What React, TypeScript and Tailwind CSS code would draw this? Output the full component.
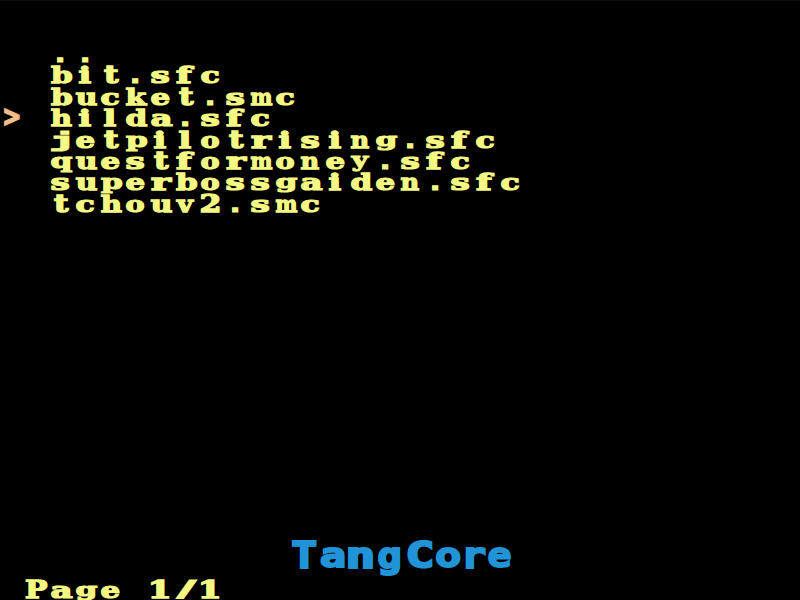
import React from "react";

type Box = [x0: number, x1: number, y0: number, y1: number];

const SERIF = '"DejaVu Serif", serif';
const SANS = '"DejaVu Sans", sans-serif';
const MONO = '"DejaVu Sans Mono", monospace';

// One character cell is 8x8 dots; the screen holds 32 columns by 28 rows.
const DOT_X = 25 / 8;
const DOT_Y = 600 / 28 / 8;
const SIZE = 32;
const LINE = 40;
const STROKE = 1.8;

// Ink extents of each character in dots: left, right, top, bottom.
const INK: Record<string, Box> = {
  a: [0, 7, 2, 7], b: [0, 7, 0, 7], c: [0, 6, 2, 7], d: [0, 7, 0, 7],
  e: [0, 6, 2, 7], f: [0, 6, 0, 7], g: [0, 7, 2, 8], h: [0, 7, 0, 7],
  i: [1, 5, 0, 7], j: [0, 6, 0, 8], k: [0, 7, 0, 7], l: [1, 5, 0, 7],
  m: [0, 7, 2, 7], n: [0, 6, 2, 7], o: [0, 6, 2, 7], p: [0, 7, 2, 8],
  q: [0, 7, 2, 8], r: [0, 7, 2, 7], s: [0, 6, 2, 7], t: [1, 6, 0, 7],
  u: [0, 7, 2, 7], v: [0, 6, 2, 7], y: [0, 6, 2, 8], P: [0, 7, 0, 7],
  "1": [0, 6, 0, 7], "2": [0, 6, 0, 7], "/": [0, 7, 0, 7],
  ".": [2, 4, 5, 7], ">": [1, 6, 0, 7],
};

const FAMILY: Record<string, string> = { ".": SANS, ">": SANS, j: MONO };

const probe = document.createElement("canvas").getContext("2d")!;

/** Transform that makes a character's ink, outline included, fill the given pixel box. */
function fit(ch: string, family: string, [x0, x1, y0, y1]: Box): string {
  probe.font = `bold 320px ${family}`;
  const m = probe.measureText(ch);
  const k = SIZE / 320;
  const pad = STROKE / 2;
  const left = -m.actualBoundingBoxLeft * k - pad;
  const right = m.actualBoundingBoxRight * k + pad;
  const ascent = m.actualBoundingBoxAscent * k + pad;
  const descent = m.actualBoundingBoxDescent * k + pad;
  const a = Math.round(m.fontBoundingBoxAscent * k);
  const d = Math.round(m.fontBoundingBoxDescent * k);
  const baseline = (LINE - a - d) / 2 + a;
  const sx = (x1 - x0) / (right - left);
  const sy = (y1 - y0) / (ascent + descent);
  const tx = x0 - left * sx;
  const ty = y0 - (baseline - ascent) * sy;
  return `matrix(${sx},0,0,${sy},${tx},${ty})`;
}

function Glyph({ ch, family, box }: { ch: string; family: string; box: Box }) {
  return (
    <span
      className="block w-0 origin-top-left text-[32px] leading-[40px] font-bold [-webkit-text-stroke:1.8px_currentColor]"
      style={{ fontFamily: family, transform: fit(ch, family, box) }}
    >
      {ch}
    </span>
  );
}

function Line({ text }: { text: string }) {
  return (
    <div className="h-full whitespace-pre text-[0px] leading-none">
      {Array.from(text).map((ch, i) => {
        const ink = INK[ch];
        if (!ink) return <span key={i} className="inline-block w-[25px]">{ch}</span>;
        const box: Box = [
          ink[0] * DOT_X + 0.5, ink[1] * DOT_X + 0.8,
          ink[2] * DOT_Y + 0.9, ink[3] * DOT_Y + 1.1,
        ];
        return (
          <span key={i} className="inline-block h-[21px] w-[25px] align-top">
            <Glyph ch={ch} family={FAMILY[ch] ?? SERIF} box={box} />
          </span>
        );
      })}
    </div>
  );
}

const FILES = [
  "..",
  "bit.sfc",
  "bucket.smc",
  "hilda.sfc",
  "jetpilotrising.sfc",
  "questformoney.sfc",
  "superbossgaiden.sfc",
  "tchouv2.smc",
];
const SELECTED = 3;

const TITLE: { ch: string; box: Box }[] = [
  { ch: "T", box: [0.3, 25.6, 0.3, 29.8] },
  { ch: "a", box: [29, 54, 8, 29.8] },
  { ch: "n", box: [56.7, 82.3, 8, 29.8] },
  { ch: "g", box: [87, 109.6, 8, 38] },
  { ch: "C", box: [116, 141.6, 0.3, 29.8] },
  { ch: "o", box: [144.7, 169.7, 8, 29.8] },
  { ch: "r", box: [174.7, 194.7, 8, 29.8] },
  { ch: "e", box: [196.7, 220, 8, 29.8] },
];

export default function App() {
  return (
    <main className="flex h-[600px] w-[800px] flex-col overflow-hidden border-t border-[#0d0d0d] bg-black">
      <section className="-mt-px grid grid-rows-[repeat(8,21.4286px)] pt-[42.857px] text-[#f5f984]">
        {FILES.map((name, i) => (
          <div key={name} className="flex">
            <div className="w-[50px] text-[#f0bd88]">{i === SELECTED && <Line text=">" />}</div>
            <Line text={name} />
          </div>
        ))}
      </section>
      <footer className="mt-auto flex h-[61px] flex-col justify-between text-[#f5f984]">
        <h1 className="ml-[291px] h-[38px] whitespace-pre text-[0px] leading-none text-[#2094d6]">
          {TITLE.map(({ ch, box }) => (
            <span key={ch} className="inline-block h-[38px] w-0 align-top">
              <Glyph ch={ch} family={MONO} box={box} />
            </span>
          ))}
        </h1>
        <div className="h-[21.4286px] pl-[25px]">
          <Line text="Page 1/1" />
        </div>
      </footer>
    </main>
  );
}
